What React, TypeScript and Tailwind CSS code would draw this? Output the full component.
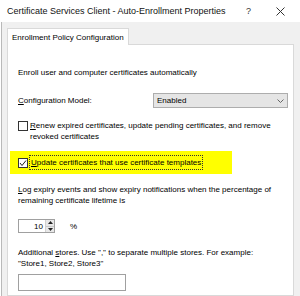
import React from 'react';

function Check({ checked }: { checked?: boolean }) {
  return (
    <div className="w-[10px] h-[10px] border border-[#333] bg-white flex items-center justify-center shrink-0">
      {checked && (
        <svg width="8" height="8" viewBox="0 0 8 8">
          <polyline points="1,4 3,6.5 7,1.5" fill="none" stroke="#222" strokeWidth="1" />
        </svg>
      )}
    </div>
  );
}

export default function App() {
  return (
    <div
      className="w-[300px] h-[296px] overflow-hidden flex flex-col text-black"
      style={{ fontFamily: '"Liberation Sans", Arial, sans-serif' }}
    >
      {/* title bar */}
      <div className="h-[22px] bg-white flex items-center shrink-0">
        <span className="pl-[7px] text-[9px] leading-[11px] text-[#111]">
          Certificate Services Client - Auto-Enrollment Properties
        </span>
        <span className="ml-auto mr-[25px] text-[9px] leading-[11px] text-[#333]">?</span>
        <svg className="mr-[15px]" width="9" height="9" viewBox="0 0 9 9">
          <path d="M0.5 0.5 L8.5 8.5 M8.5 0.5 L0.5 8.5" stroke="#333" strokeWidth="1" />
        </svg>
      </div>

      {/* body */}
      <div className="flex-1 bg-[#f0f0f0] border-l border-[#b9b9b9] ml-[1px] pl-[5px] pr-[6px] pt-[5px] flex flex-col">
        <div className="flex">
          <div className="w-[122px] h-[17px] bg-white border border-b-0 border-[#d9d9d9] flex items-center pl-[4px] text-[8px] leading-[11px] relative top-[1px]">
            Enrollment Policy Configuration
          </div>
        </div>
        <div className="flex-1 bg-white border border-[#d9d9d9] pl-[10px] text-[8px] leading-[11px]">
          <div className="mt-[22px]">Enroll user and computer certificates automatically</div>

          <div className="mt-[15px] flex items-center h-[15px]">
            <div className="w-[135px]">
              <span className="underline">C</span>onfiguration Model:
            </div>
            <div className="w-[135px] h-[15px] bg-[#e5e5e5] border border-[#adadad] flex items-center pl-[3px] pr-[3px]">
              <span>Enabled</span>
              <svg className="ml-auto" width="7" height="4" viewBox="0 0 7 4">
                <polyline points="0.5,0.5 3.5,3.5 6.5,0.5" fill="none" stroke="#666" strokeWidth="1" />
              </svg>
            </div>
          </div>

          <div className="mt-[12px] flex">
            <div className="mt-[1px]">
              <Check />
            </div>
            <div className="ml-[2px] w-[250px]">
              <span className="underline">R</span>enew expired certificates, update pending certificates, and remove revoked certificates
            </div>
          </div>

          <div className="mt-[9px] -ml-[8px] w-[222px] h-[23px] bg-[#ffff00] flex items-center pl-[8px]">
            <Check checked />
            <div className="ml-[1px] border border-dotted border-[#333] px-[1px] leading-[13px]">
              <span className="underline">U</span>pdate certificates that use certificate templates
            </div>
          </div>

          <div className="mt-[10px] w-[265px]">
            <span className="underline">L</span>og expiry events and show expiry notifications when the percentage of remaining certificate lifetime is
          </div>

          <div className="mt-[13px] flex items-center">
            <div className="w-[37px] h-[14px] border border-[#a0a0a0] flex">
              <div className="flex-1 flex items-center justify-end pr-[2px]">10</div>
              <div className="w-[9px] flex flex-col border-l border-[#d0d0d0]">
                <div className="flex-1 bg-[#e8e8e8] border-b border-[#c8c8c8] flex items-center justify-center">
                  <svg width="5" height="3" viewBox="0 0 5 3"><polygon points="2.5,0 5,3 0,3" fill="#222" /></svg>
                </div>
                <div className="flex-1 bg-[#e8e8e8] flex items-center justify-center">
                  <svg width="5" height="3" viewBox="0 0 5 3"><polygon points="0,0 5,0 2.5,3" fill="#222" /></svg>
                </div>
              </div>
            </div>
            <span className="ml-[15px]">%</span>
          </div>

          <div className="mt-[14px] w-[265px]">
            Additional <span className="underline">s</span>tores. Use "," to separate multiple stores. For example: "Store1, Store2, Store3"
          </div>

          <div className="mt-[5px] w-[108px] h-[17px] border border-[#a0a0a0] bg-white" />
        </div>
      </div>
    </div>
  );
}
